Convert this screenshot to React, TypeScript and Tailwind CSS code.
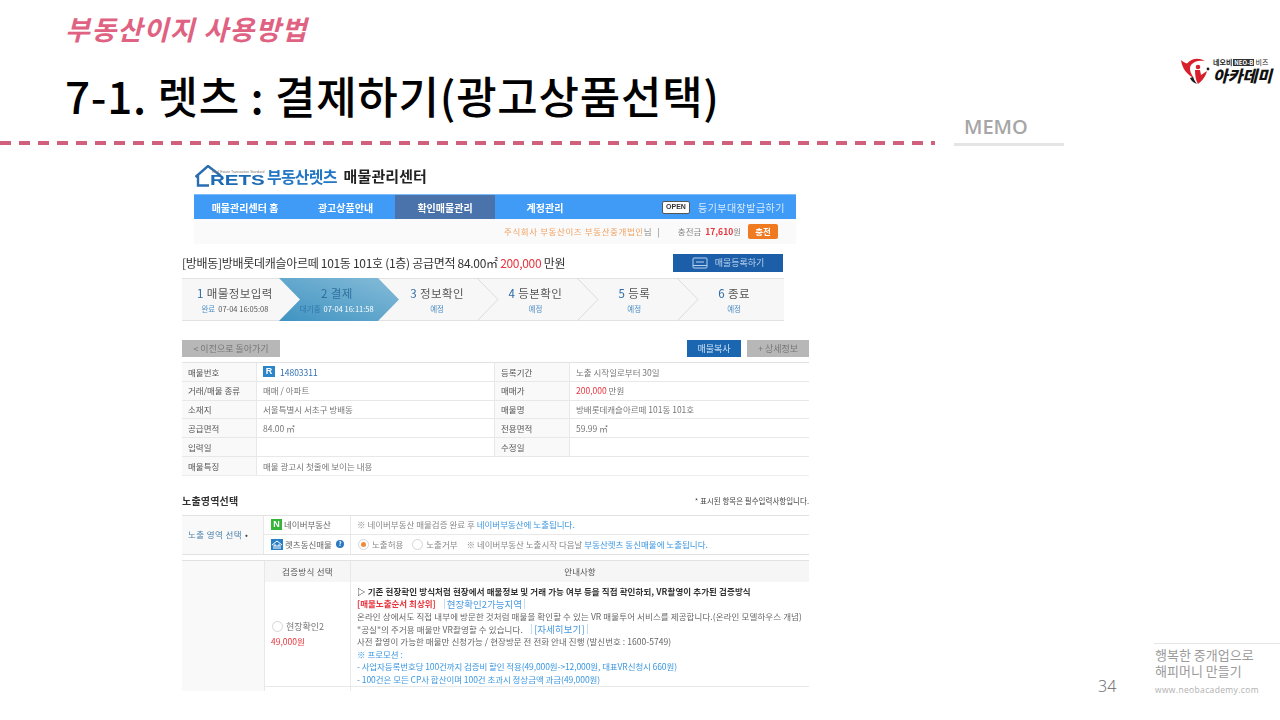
import type { ReactNode } from 'react';

const kr = "font-['Noto_Sans_CJK_KR',sans-serif]";

const steps = [
  { no: '1', name: '매물정보입력', status: '완료', time: '07-04 16:05:08', pad: '' },
  { no: '2', name: '결제', status: '대기중', time: '07-04 16:11:58', active: true, pad: 'pl-[4px]' },
  { no: '3', name: '정보확인', status: '예정', pad: 'pl-[5px]' },
  { no: '4', name: '등본확인', status: '예정', pad: 'pl-[2px]' },
  { no: '5', name: '등록', status: '예정', pad: '' },
  { no: '6', name: '종료', status: '예정', pad: '' },
];

function Label({ children }: { children: ReactNode }) {
  return <div className="flex items-center pl-[6px] bg-[#f9f9f9] text-[#555] border-r border-[#e8e8e8]">{children}</div>;
}

function Value({ children, wide }: { children?: ReactNode; wide?: boolean }) {
  return (
    <div className={wide ? 'col-span-3 flex items-center pl-[6px] text-[#777]' : 'flex items-center pl-[6px] text-[#777] border-r border-[#e8e8e8] last:border-r-0'}>
      {children}
    </div>
  );
}

function Radio({ on }: { on?: boolean }) {
  return (
    <span className="flex items-center justify-center w-[11px] h-[11px] rounded-full border border-[#d5d5d5] bg-white shrink-0">
      {on && <span className="w-[5px] h-[5px] rounded-full bg-[#f08a3c]" />}
    </span>
  );
}

function AcademyLogo() {
  return (
    <div className="flex items-center gap-[2px] w-[92px] h-[28px]">
      <svg width="30" height="28" viewBox="0 0 30 28" className="shrink-0">
        <path d="M0 3c2 2 4 3 6 3.500C10 2 17 0 24 4 18 3 13 4 10 8c-2 3-1 8 3 13C6 18 1 11 0 3z" fill="#d8202c" />
        <circle cx="17" cy="10" r="2.3" fill="#d8202c" />
        <path d="M14 13h5l1 5 6-4c-1 5-5 10-9 13-2-3-3-8-3-14z" fill="#d8202c" />
        <path d="M12 20c1 2 2 5 4 7-3-1-6-3-7-6z" fill="#1a1a1a" />
        <circle cx="27" cy="12" r="1.4" fill="#1a1a1a" />
      </svg>
      <div className={`flex flex-col ${kr}`}>
        <div className="flex items-center gap-[1px] text-[7px] leading-[9px] font-bold text-[#222] whitespace-nowrap">
          <span>네오비</span>
          <span className="bg-[#333] text-white text-[6px] leading-[7px] px-[1px]">NEO-B</span>
          <span className="font-normal">비즈</span>
        </div>
        <div className="text-[16px] leading-[17px] font-black italic text-[#111] whitespace-nowrap">아카데미</div>
      </div>
    </div>
  );
}

function RetsHeader() {
  return (
    <div className="flex items-center h-[30px] pl-[13px] pb-[6px]">
      <div className="relative w-[72px] h-[22px] shrink-0">
        <svg width="30" height="22" viewBox="0 0 30 22" className="absolute left-0 top-0">
          <path d="M0.500 12 13 1l13 10M3 10v10.500h11" fill="none" stroke="#2a6db0" strokeWidth="2.4" />
        </svg>
        <span className="absolute left-[17px] top-[5px] text-[3.5px] leading-[4px] text-[#777] whitespace-nowrap font-['Liberation_Sans',sans-serif]">Real Estate Transaction Standard</span>
        <span className="absolute left-[15px] top-[9px] origin-left scale-x-[1.37] text-[15px] leading-[12px] font-bold text-[#1d6ab5] font-['Liberation_Sans',sans-serif]">RETS</span>
      </div>
      <span className={`text-[16px] leading-[20px] font-bold text-[#2377c4] tracking-[-0.8px] whitespace-nowrap ${kr}`}>부동산렛츠</span>
      <span className={`ml-[7px] text-[15px] leading-[20px] font-bold text-[#222] tracking-[0.1px] whitespace-nowrap ${kr}`}>매물관리센터</span>
    </div>
  );
}

function Nav() {
  return (
    <div className="flex items-center h-[25px] ml-[12px] w-[602px] bg-[#409bf7] text-white text-[10px] font-bold border-t border-[#7ebcf9]">
      <div className="w-[102px] text-center">매물관리센터 홈</div>
      <div className="w-[99px] text-center">광고상품안내</div>
      <div className="w-[100px] h-full flex items-center justify-center bg-[#4b73ab]">확인매물관리</div>
      <div className="w-[100px] text-center">계정관리</div>
      <div className="ml-[67px] w-[28px] h-[13px] flex items-center justify-center bg-white border border-[#555] rounded-[2px] text-[#333] text-[7px] font-black font-['Liberation_Sans',sans-serif]">OPEN</div>
      <div className="ml-[8px] tracking-[0.45px] font-normal text-[#d6ebff] whitespace-nowrap">등기부대장발급하기</div>
    </div>
  );
}

function Balance() {
  return (
    <div className="flex items-center justify-end h-[25px] ml-[12px] w-[602px] bg-[#fafafa] text-[8.5px] pr-[18px] whitespace-nowrap">
      <span className="tracking-[0.6px] text-[#f0a060]">주식회사 부동산이즈 부동산중개법인</span>
      <span className="text-[#888]">님</span>
      <span className="ml-[6px] text-[#777]">|</span>
      <span className="ml-[18px] text-[#888]">충전금</span>
      <span className="ml-[4px] text-[#e8343c] font-bold">17,610</span>
      <span className="text-[#888]">원</span>
      <span className="ml-[7px] w-[30px] h-[15px] flex items-center justify-center rounded-[2px] bg-[#f07a1f] text-white font-bold">충전</span>
    </div>
  );
}

function TitleRow() {
  return (
    <div className="flex items-center justify-between h-[34px] w-[602px] mt-[2px]">
      <div className="text-[12px] text-[#333] tracking-[-0.3px] whitespace-nowrap">
        [방배동]방배롯데캐슬아르떼 101동 101호 (1층) 공급면적 84.00㎡ <span className="text-[#e8343c]">200,000</span> 만원
      </div>
      <div className="flex items-center justify-center gap-[7px] w-[110px] h-[18px] mr-[1px] bg-[#1c5ea8] text-[#b9d3ee] text-[9px]">
        <svg width="16" height="12" viewBox="0 0 16 12" fill="none" stroke="#b9d3ee">
          <rect x="1" y="1" width="14" height="10" rx="1" />
          <path d="M4 5h8M1 8.500h14" />
        </svg>
        매물등록하기
      </div>
    </div>
  );
}

function Steps() {
  return (
    <div className="relative flex w-[602px] h-[43px] bg-[#f7f7f7] border-y border-[#e2e2e2] mt-[-2px] pl-[3px]">
      <svg width="602" height="43" viewBox="0 0 602 43" className="absolute left-0 top-[-1px]">
        <defs>
          <linearGradient id="stepFill" x1="0" y1="1" x2="1" y2="0">
            <stop offset="0" stopColor="#3f93c2" />
            <stop offset="1" stopColor="#86bcd8" />
          </linearGradient>
        </defs>
        <path d="M97 0h99l21 21.500-21 21.500H97l21-21.500z" fill="url(#stepFill)" />
        <path d="M295 0l21 21.500-21 21.500M395 0l21 21.500-21 21.500M495 0l21 21.500-21 21.500" fill="none" stroke="#dcdcdc" />
      </svg>
      {steps.map((s) => (
        <div key={s.no} className={`relative w-[100px] flex flex-col items-center pt-[6px] whitespace-nowrap ${s.pad}`}>
          <div className={`text-[11.5px] leading-[17px] tracking-[0.4px] ${s.active ? 'text-[#2f6f9f]' : 'text-[#555]'}`}>
            <span className={s.active ? '' : 'text-[#2b6aa8]'}>{s.no}</span> {s.name}
          </div>
          <div className="text-[7.5px] leading-[12px] mt-[1px]">
            <span className={s.active ? 'text-[#2f78a8]' : 'text-[#4f8fc4]'}>{s.status}</span>
            {s.time && <span className={s.active ? 'ml-[3px] text-white' : 'ml-[3px] text-[#555]'}>{s.time}</span>}
          </div>
        </div>
      ))}
    </div>
  );
}

function ActionRow() {
  return (
    <div className="flex items-center mt-[19px] h-[17px] text-[9px] whitespace-nowrap">
      <div className="w-[98px] h-full flex items-center justify-center bg-[#b7b7b7] text-[#777]">&lt; 이전으로 돌아가기</div>
      <div className="ml-auto w-[54px] h-full flex items-center justify-center bg-[#1b66b0] text-[#cfe2f5]">매물복사</div>
      <div className="ml-[6px] w-[62px] h-full flex items-center justify-center bg-[#b7b7b7] text-[#777]">+ 상세정보</div>
    </div>
  );
}

function InfoTable() {
  const rows: [string, ReactNode, string, ReactNode][] = [
    [
      '매물번호',
      <span className="flex items-center gap-[5px] text-[#2f6fb3]">
        <span className="w-[12px] h-[11px] bg-[#2a86c8] text-white text-[9px] leading-[11px] text-center font-bold font-['Liberation_Sans',sans-serif]">R</span>
        14803311
      </span>,
      '등록기간',
      '노출 시작일로부터 30일',
    ],
    ['거래/매물 종류', '매매 / 아파트', '매매가', <span><span className="text-[#e8343c]">200,000</span> 만원</span>],
    ['소재지', '서울특별시 서초구 방배동', '매물명', '방배롯데캐슬아르떼 101동 101호'],
    ['공급면적', '84.00 ㎡', '전용면적', '59.99 ㎡'],
    ['입력일', '', '수정일', ''],
  ];
  return (
    <div className="mt-[5px] border-t border-[#e2e2e2] text-[8.5px] whitespace-nowrap">
      {rows.map((r) => (
        <div key={r[0]} className="grid grid-cols-[75px_238px_75px_239px] h-[18.8px] border-b border-[#e8e8e8]">
          <Label>{r[0]}</Label>
          <Value>{r[1]}</Value>
          <Label>{r[2]}</Label>
          <Value>{r[3]}</Value>
        </div>
      ))}
      <div className="grid grid-cols-[75px_238px_75px_239px] h-[18.8px] border-b border-[#eeeeee]">
        <Label>매물특징</Label>
        <Value wide>매물 광고시 첫줄에 보이는 내용</Value>
      </div>
    </div>
  );
}

function ExposureTable() {
  return (
    <div className="grid grid-cols-[82px_87px_458px] grid-rows-[19px_19px] mt-[5px] border-t border-b border-[#e2e2e2] text-[8.5px] whitespace-nowrap">
      <div className="row-span-2 flex items-center pl-[6px] bg-[#f9f9f9] text-[#4a7fa8] border-r border-[#e8e8e8] tracking-[0.4px]">
        노출 영역 선택 <span className="ml-[3px] text-[#444]">•</span>
      </div>
      <div className="flex items-center pl-[7px] gap-[2px] text-[#666] border-b border-r border-[#e8e8e8]">
        <span className="w-[11px] h-[11px] bg-[#35b53a] text-white text-[9px] leading-[11px] text-center font-black font-['Liberation_Sans',sans-serif]">N</span>
        네이버부동산
      </div>
      <div className="flex items-center pl-[6px] text-[#888] border-b border-[#e8e8e8]">
        ※ 네이버부동산 매물검증 완료 후&nbsp;<span className="text-[#3b97e0]">네이버부동산에 노출됩니다.</span>
      </div>
      <div className="flex items-center pl-[7px] gap-[2px] text-[#666] border-r border-[#e8e8e8]">
        <svg width="12" height="11" viewBox="0 0 12 11" className="shrink-0">
          <rect width="12" height="11" fill="#2a7fc4" />
          <path d="M1 6l5-4 5 4M3 10V6h2v4M7 10V6h2v4" fill="none" stroke="#fff" />
        </svg>
        렛츠동신매물
        <span className="ml-[2px] w-[8px] h-[8px] rounded-full bg-[#2a78c0] text-white text-[6px] leading-[8px] text-center font-bold">?</span>
      </div>
      <div className="flex items-center pl-[7px] text-[#888]">
        <Radio on />
        <span className="ml-[3px]">노출허용</span>
        <span className="ml-[9px]"><Radio /></span>
        <span className="ml-[3px]">노출거부</span>
        <span className="ml-[9px]">※ 네이버부동산 노출시작 다음날&nbsp;</span>
        <span className="text-[#3b97e0]">부동산렛츠 동신매물에 노출됩니다.</span>
      </div>
    </div>
  );
}

function VerifyTable() {
  return (
    <div className="grid grid-cols-[82px_87px_458px] grid-rows-[21px_105px_4px] mt-[5px] border-t border-[#e2e2e2] text-[8.5px] whitespace-nowrap">
      <div className="row-span-3 bg-[#f9f9f9]" />
      <div className="flex items-center justify-center bg-[#f6f6f6] text-[#555] border-x border-[#e8e8e8] tracking-[0.3px]">검증방식 선택</div>
      <div className="flex items-center justify-center bg-[#f6f6f6] text-[#555]">안내사항</div>
      <div className="flex flex-col justify-center pl-[6px] border-x border-b border-[#e8e8e8]">
        <div className="flex items-center gap-[3px] text-[#777] text-[9px] ml-[1px]">
          <Radio />
          현장확인2
        </div>
        <div className="mt-[1px] text-[#e8343c]">49,000원</div>
      </div>
      <div className="pl-[6px] pt-[3px] leading-[12.6px] border-b border-[#e8e8e8] text-[#666]">
        <div className="text-[#333] font-bold tracking-[0.1px]">▷ 기존 현장확인 방식처럼 현장에서 매물정보 및 거래 가능 여부 등을 직접 확인하되, VR촬영이 추가된 검증방식</div>
        <div className="flex items-center">
          <span className="font-bold text-[#e8343c]">[매물노출순서 최상위]</span>
          <span className="ml-[8px] px-[2px] border-x border-[#c8dcef] text-[#4a9ae0] text-[9.5px] leading-[10px]">현장확인2가능지역</span>
        </div>
        <div className="tracking-[0.1px]">온라인 상에서도 직접 내부에 방문한 것처럼 매물을 확인할 수 있는 VR 매물투어 서비스를 제공합니다.(온라인 모델하우스 개념)</div>
        <div className="flex items-center tracking-[0.1px]">
          "공실"의 주거용 매물만 VR촬영할 수 있습니다.
          <span className="ml-[8px] px-[2px] border-x border-[#c8dcef] text-[#4a9ae0] text-[9.5px] leading-[10px]">[자세히보기]</span>
        </div>
        <div className="tracking-[0.05px]">사전 촬영이 가능한 매물만 신청가능 / 현장방문 전 전화 안내 진행 (발신번호 : 1600-5749)</div>
        <div className="text-[#3b97e0]">※ 프로모션 :</div>
        <div className="text-[#3b97e0] tracking-[-0.1px]">- 사업자등록번호당 100건까지 검증비 할인 적용(49,000원-&gt;12,000원, 대표VR신청시 660원)</div>
        <div className="text-[#3b97e0] tracking-[-0.05px]">- 100건은 모든 CP사 합산이며 100건 초과시 정상금액 과금(49,000원)</div>
      </div>
      <div className="border-x border-[#e8e8e8]" />
      <div />
    </div>
  );
}

function CapturedPage() {
  return (
    <div className={`ml-[182px] mt-[19px] w-[627px] blur-[0.35px] ${kr}`}>
      <RetsHeader />
      <Nav />
      <Balance />
      <TitleRow />
      <Steps />
      <ActionRow />
      <InfoTable />
      <div className="flex items-end justify-between h-[34px] pb-[2px]">
        <span className="text-[10px] leading-[14px] font-bold text-[#333] tracking-[0.2px]">노출영역선택</span>
        <span className="text-[7.5px] leading-[14px] text-[#444]">* 표시된 항목은 필수입력사항입니다.</span>
      </div>
      <ExposureTable />
      <VerifyTable />
    </div>
  );
}

export default function App() {
  return (
    <div className="flex w-[1280px] h-[720px] overflow-hidden bg-white">
      <div className="w-[954px] shrink-0">
        <div className={`h-[141px] pl-[65px] pt-[10px] ${kr}`}>
          <div className="text-[27px] leading-[38px] font-bold italic text-[#df6282] tracking-[1.3px] whitespace-nowrap">부동산이지 사용방법</div>
          <div className="mt-[15px] text-[44px] leading-[64px] font-medium text-black tracking-[0.72px] whitespace-nowrap">7-1. 렛츠 : 결제하기(광고상품선택)</div>
        </div>
        <div className="w-[935px] h-[4px] bg-[repeating-linear-gradient(90deg,#d1607c_0_11px,transparent_11px_19px)]" />
        <CapturedPage />
      </div>
      <div className="flex flex-col flex-1 min-w-0">
        <div className="ml-[227px] mt-[57px]"><AcademyLogo /></div>
        <div className="mt-[29px] w-[110px] h-[32px] border-b-[3px] border-[#e5e5e5] pl-[10px] text-[20px] leading-[26px] font-semibold text-[#a6a6a6] font-['Open_Sans',sans-serif]">MEMO</div>
        <div className="mt-auto flex items-end mb-[24px]">
          <span className="ml-[144px] w-[56px] text-[16px] leading-[20px] font-light text-[#666] font-['Open_Sans',sans-serif]">34</span>
          <div className={`flex-1 border-t border-[#e5e5e5] pl-[1px] pt-[3px] ${kr}`}>
            <div className="text-[13px] leading-[16px] text-[#9a9a9a] whitespace-nowrap">행복한 중개업으로</div>
            <div className="text-[13px] leading-[16px] text-[#9a9a9a] whitespace-nowrap">해피머니 만들기</div>
            <div className="mt-[5px] text-[8.5px] leading-[12px] tracking-[0.35px] text-[#b0b0b0] whitespace-nowrap font-['Open_Sans',sans-serif]">www.neobacademy.com</div>
          </div>
        </div>
      </div>
    </div>
  );
}
